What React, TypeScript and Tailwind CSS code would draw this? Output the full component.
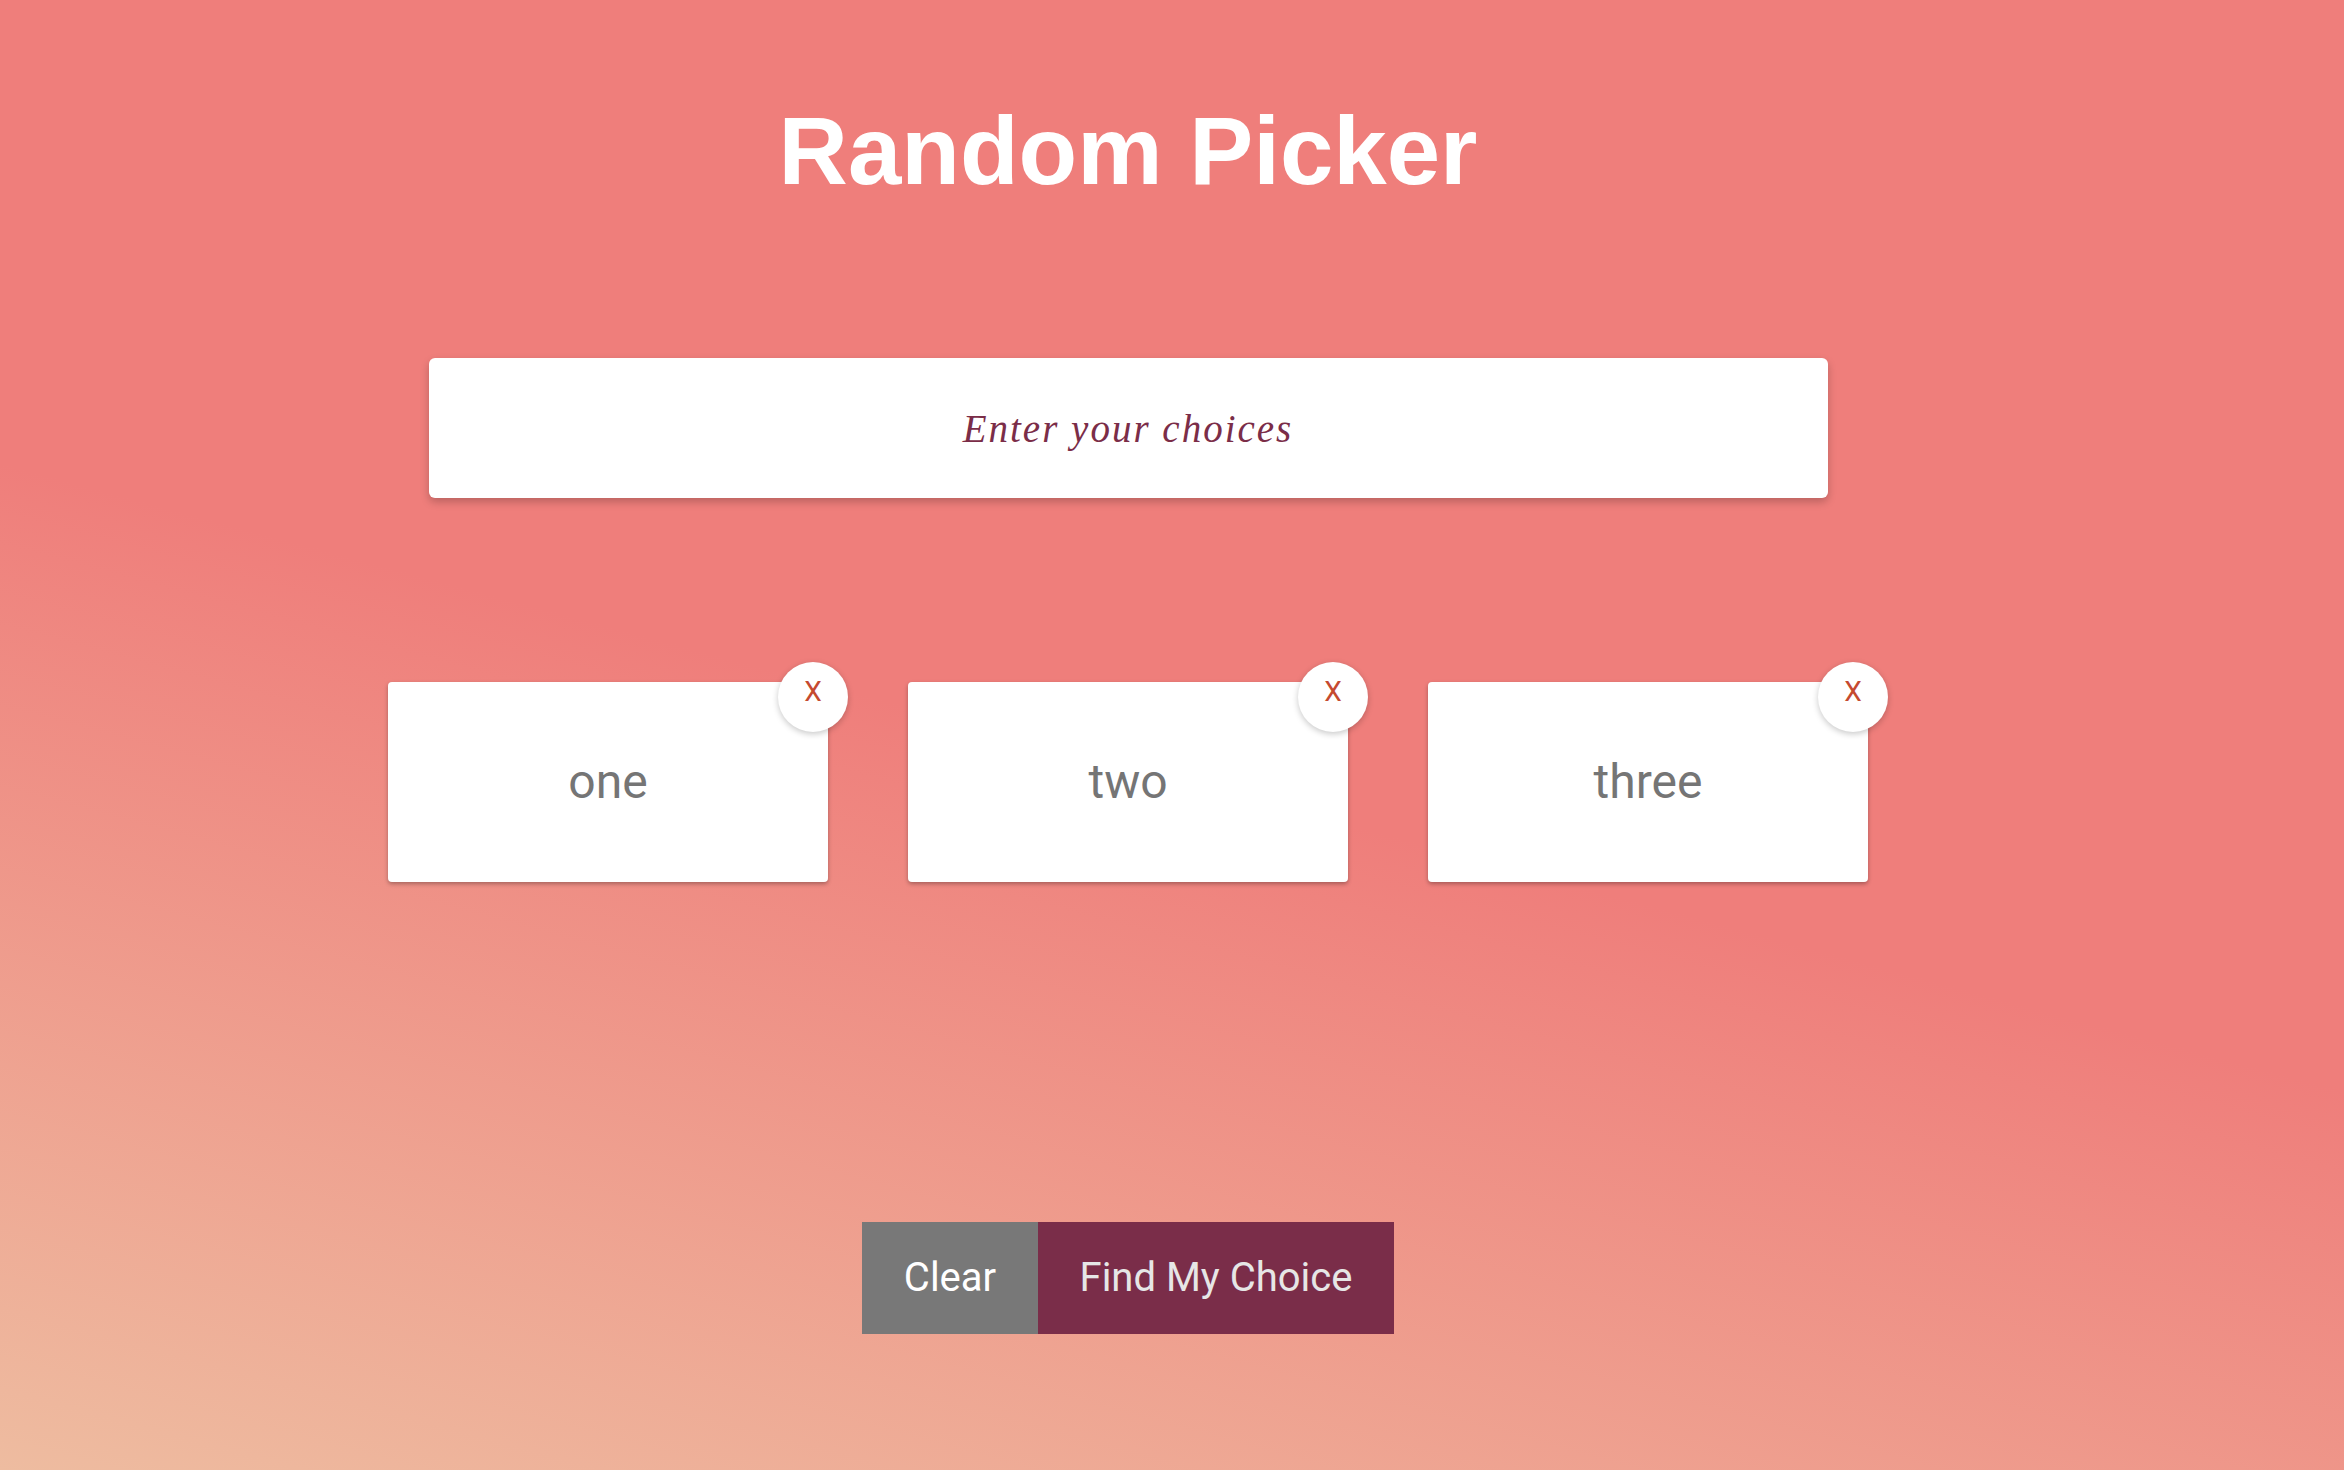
import { useState } from "react";

export default function App() {
  const [choices, setChoices] = useState(["one", "two", "three"]);
  const [text, setText] = useState("");

  const remove = (index: number) => {
    setChoices(choices.filter((_, i) => i !== index));
  };

  return (
    <div className="min-h-screen w-full bg-[linear-gradient(15deg,#eebca0_0%,#ef7e7b_48%)] font-['Roboto',sans-serif]">
      <div className="flex flex-col items-center pr-[88px]">
        <h1 className="mt-[103px] text-[96px] leading-[96px] font-bold text-white font-['Liberation_Sans',Arial,sans-serif]">
          Random Picker
        </h1>

        <input
          value={text}
          onChange={(e) => setText(e.target.value)}
          placeholder="Enter your choices"
          className="mt-[159px] w-[1399px] h-[140px] rounded-[6px] bg-white text-center text-[39px] italic tracking-[2px] text-[#7b2d48] placeholder:text-[#7b2d48] outline-none shadow-[0_4px_8px_rgba(0,0,0,0.22)] font-['Liberation_Serif','Times_New_Roman',serif]"
        />

        <div className="mt-[184px] flex gap-[80px]">
          {choices.map((choice, index) => (
            <div
              key={index}
              className="relative w-[440px] h-[200px] rounded-[4px] bg-white shadow-[0_2px_4px_rgba(0,0,0,0.3)] flex items-center justify-center"
            >
              <span className="text-[48px] text-[#757575]">{choice}</span>
              <button
                onClick={() => remove(index)}
                className="absolute -top-[20px] -right-[20px] w-[70px] h-[70px] rounded-full bg-white shadow-[0_2px_6px_rgba(0,0,0,0.22)] flex items-center justify-center pb-[10px] text-[28px] leading-none text-[#c54a30]"
              >
                X
              </button>
            </div>
          ))}
        </div>

        <div className="mt-[340px] flex">
          <button
            onClick={() => setChoices([])}
            className="w-[176px] h-[112px] bg-[#787878] text-white text-[40px] flex items-center justify-center"
          >
            Clear
          </button>
          <button className="w-[356px] h-[112px] bg-[#7a2d49] text-[#e6e6e6] text-[40px] flex items-center justify-center">
            Find My Choice
          </button>
        </div>
      </div>
    </div>
  );
}
